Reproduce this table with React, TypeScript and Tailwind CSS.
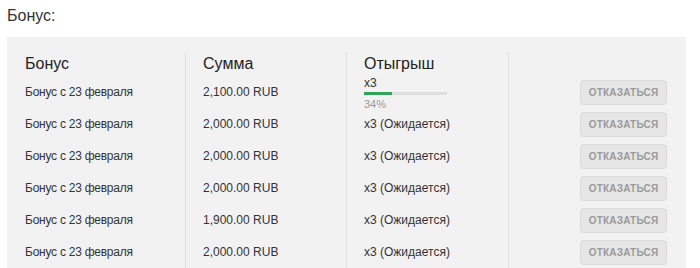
import React from 'react';

type Bonus = {
  name: string;
  amount: string;
  wager: string;
  progress?: number;
};

const BONUSES: Bonus[] = [
  { name: 'Бонус с 23 февраля', amount: '2,100.00 RUB', wager: 'x3', progress: 34 },
  { name: 'Бонус с 23 февраля', amount: '2,000.00 RUB', wager: 'x3 (Ожидается)' },
  { name: 'Бонус с 23 февраля', amount: '2,000.00 RUB', wager: 'x3 (Ожидается)' },
  { name: 'Бонус с 23 февраля', amount: '2,000.00 RUB', wager: 'x3 (Ожидается)' },
  { name: 'Бонус с 23 февраля', amount: '1,900.00 RUB', wager: 'x3 (Ожидается)' },
  { name: 'Бонус с 23 февраля', amount: '2,000.00 RUB', wager: 'x3 (Ожидается)' },
];

const Header: React.FC<{ children?: React.ReactNode }> = ({ children }) => (
  <div className="h-6 leading-6 text-[16px] text-[#222]">{children}</div>
);

const Cell: React.FC<{ children?: React.ReactNode; className?: string }> = ({ children, className = '' }) => (
  <div className={`h-8 flex items-center text-[12px] text-[#333] ${className}`}>{children}</div>
);

export default function App() {
  return (
    <div className="w-[700px] h-[268px] overflow-hidden bg-white font-['Liberation_Sans',Arial,sans-serif]">
      {/* Title */}
      <div className="px-[7px] pt-1 leading-6 text-[16px] text-[#333]">Бонус:</div>

      {/* Panel */}
      <div className="mt-[9px] ml-[7px] mr-[14px] bg-[#f2f2f2] pt-[15px] pb-4 flex">
        {/* Bonus name */}
        <div className="w-[178px] pl-[18px]">
          <Header>Бонус</Header>
          {BONUSES.map((b, i) => (
            <Cell key={i} className="tracking-[-0.25px]">{b.name}</Cell>
          ))}
        </div>

        {/* Amount */}
        <div className="w-[161px] pl-[17px] border-l border-[#e2e2e2]">
          <Header>Сумма</Header>
          {BONUSES.map((b, i) => (
            <Cell key={i}>{b.amount}</Cell>
          ))}
        </div>

        {/* Wager */}
        <div className="w-[162px] pl-[17px] border-l border-[#e2e2e2]">
          <Header>Отыгрыш</Header>
          {BONUSES.map((b, i) =>
            b.progress !== undefined ? (
              <div key={i} className="h-8 pt-px">
                <div className="leading-[13px] text-[12px] text-[#333]">{b.wager}</div>
                <div className="mt-[2px] h-[3px] w-[83px] bg-[#dedede]">
                  <div
                    className="h-full bg-[#2fa55a]"
                    style={{ width: `${b.progress}%` }}
                  />
                </div>
                <div className="mt-[3px] leading-3 text-[11px] text-[#999]">{b.progress}%</div>
              </div>
            ) : (
              <Cell key={i}>{b.wager}</Cell>
            )
          )}
        </div>

        {/* Actions */}
        <div className="flex-1 pr-[19px] border-l border-[#e2e2e2]">
          <Header />
          {BONUSES.map((_, i) => (
            <div key={i} className="h-8 flex items-center justify-end">
              <button className="w-[87px] h-[25px] bg-[#e6e6e6] border border-[#dadada] rounded-sm text-[10px] font-bold uppercase text-[#9a9a9a] tracking-[0.2px]">
                Отказаться
              </button>
            </div>
          ))}
        </div>
      </div>
    </div>
  );
}
